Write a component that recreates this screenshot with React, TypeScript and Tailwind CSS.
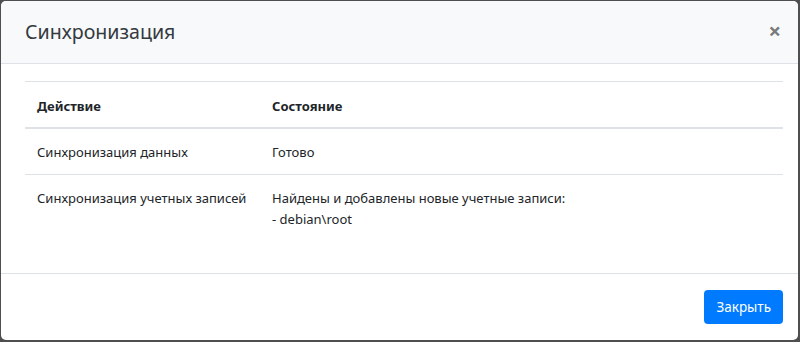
const rows = [
  { action: "Синхронизация данных", state: ["Готово"] },
  {
    action: "Синхронизация учетных записей",
    state: ["Найдены и добавлены новые учетные записи:", "- debian\\root"],
  },
];

const App = () => {
  return (
    <div className="w-[800px] h-[342px] bg-[#4f4f4f] pt-px pl-px pr-[2px] pb-[2px] font-['Noto_Sans',sans-serif] text-[#212529]">
      <div className="h-full bg-white rounded-[5px] flex flex-col overflow-hidden">
        {/* header */}
        <div className="bg-[#f8f9fa] border-b border-[#dee2e6] flex items-center justify-between pl-6 pr-[17px] py-4">
          <h5 className="text-[19.6px] leading-[30px] text-[#343a40]">Синхронизация</h5>
          <button className="text-[22px] font-bold leading-none text-[#7a7a7a] -mt-1">×</button>
        </div>
        {/* body */}
        <div className="pl-6 pr-[15px] pt-[17px] pb-4">
          <table className="w-full text-[13px] leading-[21px] border-collapse mb-4">
            <thead>
              <tr className="border-t border-b-2 border-[#dee2e6]">
                <th className="w-[235px] text-left font-bold px-3 pt-[14px] pb-[10px]">Действие</th>
                <th className="text-left font-bold px-3 pt-[14px] pb-[10px]">Состояние</th>
              </tr>
            </thead>
            <tbody>
              {rows.map((r, i) => (
                <tr key={i} className={i === 0 ? "border-b border-[#dee2e6]" : ""}>
                  <td className="px-3 pt-[13px] pb-[11px] align-top whitespace-nowrap">{r.action}</td>
                  <td className="px-3 pt-[13px] pb-[11px] align-top">
                    {r.state.map((s) => (
                      <div key={s}>{s}</div>
                    ))}
                  </td>
                </tr>
              ))}
            </tbody>
          </table>
        </div>
        {/* footer */}
        <div className="mt-auto border-t border-[#dee2e6] flex justify-end pr-[15px] py-4">
          <button className="bg-[#007bff] text-white text-[13.5px] rounded-[4px] h-[34px] px-3">Закрыть</button>
        </div>
      </div>
    </div>
  );
};

export default App;
